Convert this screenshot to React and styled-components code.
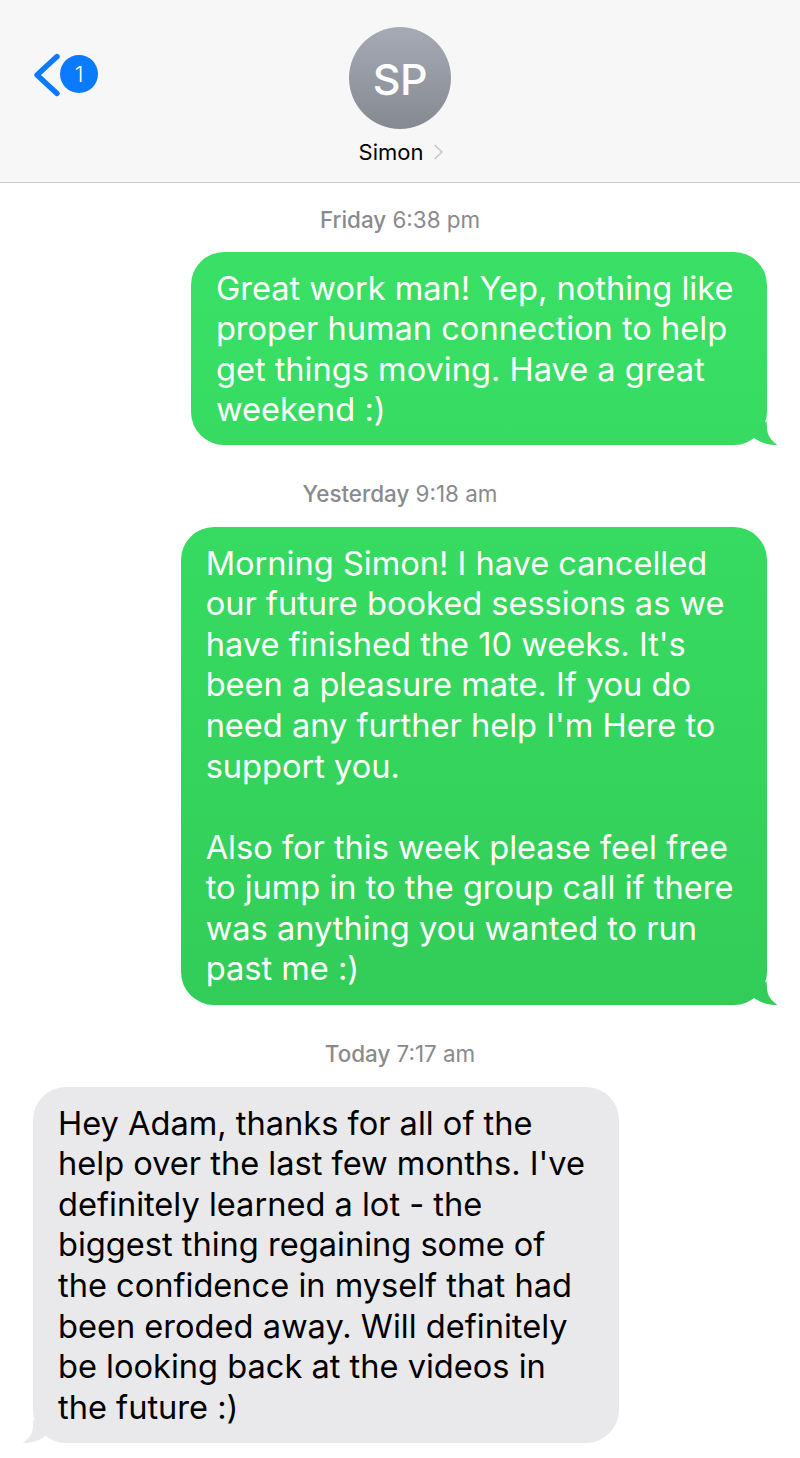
import React from 'react';
import styled, { createGlobalStyle } from 'styled-components';

const Global = createGlobalStyle`
  html, body { margin: 0; padding: 0; background: #fff; }
  body { font-family: Inter, "Liberation Sans", sans-serif; -webkit-font-smoothing: antialiased; }
`;
const Page = styled.div`
  width: 800px; height: 1458px; overflow: hidden; display: flex; flex-direction: column; background: #fff;
`;
const Header = styled.header`
  height: 155px; flex: none; background: #f7f7f7; border-bottom: 1px solid #c9c9c9;
  position: relative; display: flex; flex-direction: column; align-items: center; padding-top: 27px;
`;
const Back = styled.div`
  position: absolute; left: 33px; top: 52px; display: flex; align-items: center;
`;
const Badge = styled.div`
  width: 38px; height: 38px; border-radius: 50%; background: #0a7aff; color: #fff; margin-left: -1px; margin-top: -3px;
  display: flex; align-items: center; justify-content: center; font-size: 22px; font-weight: 300;
`;
const Avatar = styled.div`
  width: 102px; height: 102px; border-radius: 50%; background: linear-gradient(#a5aab5, #858991); color: #fff;
  display: flex; align-items: center; justify-content: center; font-size: 43px; font-weight: 500; letter-spacing: -0.5px;
  padding-top: 2px; box-sizing: border-box;
`;
const NameRow = styled.div`
  display: flex; align-items: center; gap: 10px; margin-top: 10px; font-size: 22px; line-height: 26px; color: #000; margin-left: 3px;
`;
const Thread = styled.main`
  display: flex; flex-direction: column; padding: 0 33px;
`;
const Stamp = styled.div`
  text-align: center; font-size: 22.4px; line-height: 26px; color: #8a8a8e; font-weight: 400;
  margin-top: ${p => p.$top}px; margin-bottom: ${p => p.$bottom}px;
  b { font-weight: 500; }
`;
const Bubble = styled.div`
  position: relative; width: fit-content; box-sizing: border-box; white-space: pre-line;
  padding: 15.6px 33.6px ${p => p.$padBottom}px 25px; border-radius: 33px; font-size: 32.6px; line-height: 40.55px; font-weight: 400;
  align-self: ${p => (p.$out ? 'flex-end' : 'flex-start')};
  color: ${p => (p.$out ? '#fff' : '#000')};
  background: ${p => p.$bg};
`;
const Tail = styled.svg`
  position: absolute; bottom: 0; width: 30px; height: 24px;
  ${p => (p.$out ? 'right: -11px;' : 'left: -11px; transform: scaleX(-1);')}
`;
const BackIcon = () => (
  <svg width="28" height="46" viewBox="0 0 28 46">
    <path d="M24 4.5 L4 23 L24 41.5" fill="none" stroke="#0a7aff" strokeWidth="5.4" strokeLinecap="round" strokeLinejoin="round" />
  </svg>
);
const Chevron = () => (
  <svg width="11" height="18" viewBox="0 0 11 18">
    <path d="M1.5 2 L9 9 L1.5 16" fill="none" stroke="#c7c7cc" strokeWidth="1.6" />
  </svg>
);
const BubbleTail = ({ fill, out }) => (
  <Tail $out={out} viewBox="0 0 30 24">
    <path d="M5 16 L18.5 0 L19 8 C19.5 14 23 20 29.5 23.8 C22 24.5 12 22 5 16 Z" fill={fill} />
  </Tail>
);

export default function App() {
  return (
    <Page>
      <Global />
      <Header>
        <Back>
          <BackIcon />
          <Badge>1</Badge>
        </Back>
        <Avatar>SP</Avatar>
        <NameRow>Simon <Chevron /></NameRow>
      </Header>
      <Thread>
        <Stamp $top={24} $bottom={19}><b>Friday</b> 6:38 pm</Stamp>
        <Bubble $out $padBottom={15.4} $bg="linear-gradient(#3ae066, #37db61)">
          {"Great work man! Yep, nothing like\nproper human connection to help\nget things moving. Have a great\nweekend :)"}
          <BubbleTail out fill="#37db61" />
        </Bubble>
        <Stamp $top={36} $bottom={20}><b>Yesterday</b> 9:18 am</Stamp>
        <Bubble $out $padBottom={16.4} $bg="linear-gradient(#37db61, #32cd58)">
          {"Morning Simon! I have cancelled\nour future booked sessions as we\nhave finished the 10 weeks. It's\nbeen a pleasure mate. If you do\nneed any further help I'm Here to\nsupport you.\n\nAlso for this week please feel free\nto jump in to the group call if there\nwas anything you wanted to run\npast me :)"}
          <BubbleTail out fill="#32cd58" />
        </Bubble>
        <Stamp $top={36} $bottom={20}><b>Today</b> 7:17 am</Stamp>
        <Bubble $padBottom={15.4} $bg="#e9e9eb">
          {"Hey Adam, thanks for all of the\nhelp over the last few months. I've\ndefinitely learned a lot - the\nbiggest thing regaining some of\nthe confidence in myself that had\nbeen eroded away. Will definitely\nbe looking back at the videos in\nthe future :)"}
          <BubbleTail fill="#e9e9eb" />
        </Bubble>
      </Thread>
    </Page>
  );
}
